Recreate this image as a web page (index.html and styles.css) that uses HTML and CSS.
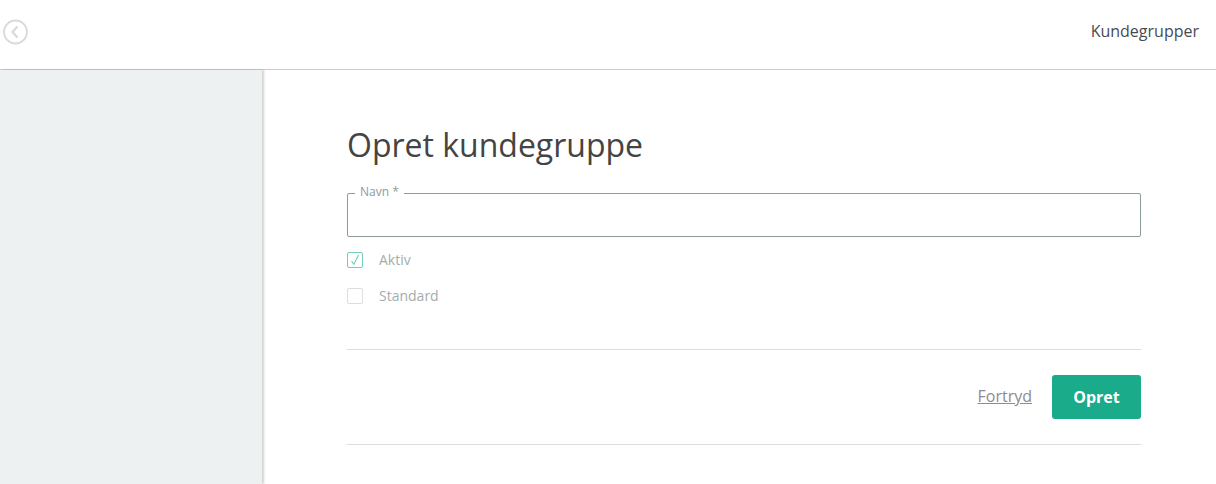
FILE: index.html
```html
<!DOCTYPE html>
<html lang="da">
<head>
    <meta charset="UTF-8">
    <meta name="viewport" content="width=device-width, initial-scale=1.0">
    <title>Opret kundegruppe</title>
    <link rel="stylesheet" href="styles.css">
</head>
<body>
    <header class="topbar">
        <a class="back" href="#" aria-label="Tilbage">
            <svg width="26" height="26" viewBox="0 0 26 26" fill="none" stroke="#d9d9d9">
                <circle cx="12.5" cy="13" r="11.5" stroke-width="1.8"/>
                <path d="M14.5 7.5 L9.5 13 L14.5 18.5" stroke-width="2.2"/>
            </svg>
        </a>
        <span class="topbar-title">Kundegrupper</span>
    </header>
    <div class="page">
        <aside class="sidebar"></aside>
        <main class="content">
            <h1>Opret kundegruppe</h1>
            <form class="form">
                <div class="field">
                    <label class="field-label" for="navn">Navn *</label>
                    <input type="text" id="navn">
                </div>
                <div class="check-row">
                    <span class="check check-on">
                        <svg width="10" height="12" viewBox="0 0 10 12" fill="none" stroke="#5cc4ac" stroke-width="1">
                            <path d="M1.5 7 L3.8 10.5 L8.5 1"/>
                        </svg>
                    </span>
                    <span class="check-text">Aktiv</span>
                </div>
                <div class="check-row">
                    <span class="check"></span>
                    <span class="check-text">Standard</span>
                </div>
                <div class="actions">
                    <a class="cancel" href="#">Fortryd</a>
                    <button type="button" class="submit">Opret</button>
                </div>
            </form>
        </main>
    </div>
</body>
</html>
```

FILE: styles.css
```css
body {
    font-family: "Open Sans", sans-serif;
    margin: 0;
    background: #ffffff;
    color: #444;
    height: 484px;
    overflow: hidden;
}

.topbar {
    height: 70px;
    box-sizing: border-box;
    border-bottom: 1px solid #cccccc;
    display: flex;
    justify-content: space-between;
    align-items: center;
    padding: 0 17px 6px 3px;
}

.back {
    display: flex;
}

.topbar-title {
    font-size: 16px;
    color: #4a4a55;
    margin-bottom: 2px;
}

.page {
    display: flex;
    height: 414px;
}

.sidebar {
    width: 262px;
    background: #edf1f2;
    box-shadow: 2px 0 2px rgba(0, 0, 0, 0.18);
}

.content {
    flex: 1;
    padding: 53px 75px 0 85px;
}

h1 {
    margin: 0 0 26px;
    font-size: 32px;
    font-weight: 400;
    line-height: 44px;
    color: #444444;
}

.field {
    position: relative;
    margin-bottom: 5px;
}

.field input {
    display: block;
    width: 100%;
    height: 44px;
    box-sizing: border-box;
    border: 1px solid #8c9c9c;
    border-radius: 2px;
    background: #fff;
}

.field-label {
    position: absolute;
    top: -9px;
    left: 8px;
    padding: 0 5px;
    background: #fff;
    font-size: 12px;
    line-height: 16px;
    color: #8c9c9c;
}

.check-row {
    display: flex;
    align-items: center;
    gap: 16px;
    height: 36px;
    font-size: 14px;
    color: #a3adad;
}

.check-text {
    margin-bottom: 2px;
}

.check {
    width: 16px;
    height: 16px;
    box-sizing: border-box;
    border: 1px solid #dddddd;
    border-radius: 2px;
    display: flex;
    align-items: center;
    justify-content: center;
}

.check-on {
    border-color: #72cdb9;
}

.actions {
    margin-top: 35px;
    border-top: 1px solid #dddddd;
    border-bottom: 1px solid #dddddd;
    height: 96px;
    box-sizing: border-box;
    display: flex;
    justify-content: flex-end;
    align-items: center;
    gap: 20px;
}

.cancel {
    font-size: 16px;
    color: #8f8a96;
    margin-bottom: 2px;
}

.submit {
    width: 89px;
    height: 44px;
    border: none;
    border-radius: 3px;
    background: #1aab8b;
    color: #fff;
    font-family: inherit;
    font-size: 16px;
    font-weight: 700;
}
```
